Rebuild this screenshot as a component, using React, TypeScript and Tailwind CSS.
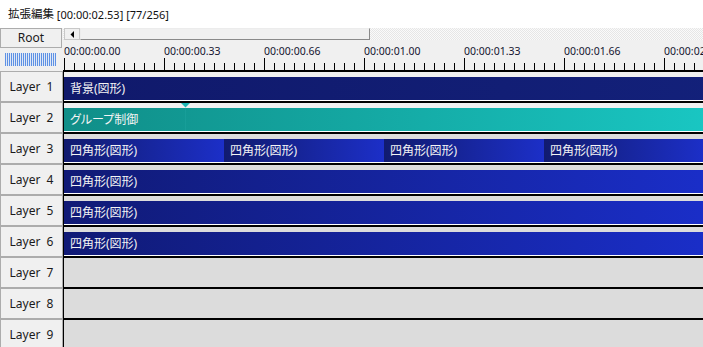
import React from "react";

const labels = [
  "00:00:00.00",
  "00:00:00.33",
  "00:00:00.66",
  "00:00:01.00",
  "00:00:01.33",
  "00:00:01.66",
  "00:00:02.00",
];

function LayerButton({ n }: { n: number }) {
  return (
    <div className="h-[31px] w-[63px] border border-[#acacac] bg-[#f0f0f0] flex items-center justify-center text-[12px] text-[#1a1a1a] whitespace-pre leading-none">
      {`Layer  ${n}`}
    </div>
  );
}

function Row({
  light,
  children,
}: {
  light?: boolean;
  children?: React.ReactNode;
}) {
  return (
    <div
      className={`relative h-[31px] flex flex-col border-l border-black ${
        light ? "bg-[#f0f0f0]" : "bg-[#dcdcdc]"
      }`}
    >
      <div className="h-[5px] shrink-0" />
      <div className="h-[24px] shrink-0 flex overflow-hidden">{children}</div>
      <div className="h-[2px] shrink-0 bg-black" />
    </div>
  );
}

function Obj({
  label,
  className,
}: {
  label: string;
  className: string;
}) {
  return (
    <div
      className={`h-[24px] shrink-0 border-b border-white flex items-center pl-[6px] text-[12px] leading-none text-[#f4f4f4] whitespace-nowrap font-['Noto_Sans','Noto_Sans_CJK_JP',sans-serif] [font-feature-settings:'palt'] ${className}`}
    >
      {label}
    </div>
  );
}

export default function App() {
  return (
    <div className="w-[703px] h-[347px] overflow-hidden bg-[#f0f0f0] font-['Noto_Sans','Noto_Sans_CJK_JP',sans-serif] text-black">
      <div className="h-[28px] bg-white flex items-center pl-[8px] leading-none text-[#111] whitespace-pre">
        <span className="text-[11.5px]">拡張編集</span>
        <span className="text-[11px]"> [00:00:02.53] [77/256]</span>
      </div>
      <div className="flex">
        {/* left column */}
        <div className="w-[63px] shrink-0 flex flex-col">
          <div className="h-[20px] w-[62px] border border-[#acacac] bg-[#f0f0f0] flex items-center justify-center text-[12px] leading-none text-[#1a1a1a]">
            Root
          </div>
          <div className="mt-[5px] ml-[5px] h-[13px] w-[51px] bg-[repeating-linear-gradient(90deg,#5e91e4_0px,#5e91e4_1px,#dfe8f6_1px,#dfe8f6_2px)]" />
          <div className="mt-[5px] flex flex-col">
            {[1, 2, 3, 4, 5, 6, 7, 8, 9].map((n) => (
              <LayerButton key={n} n={n} />
            ))}
          </div>
        </div>

        {/* right column */}
        <div className="flex-1 flex flex-col overflow-hidden">
          {/* scrollbar */}
          <div className="h-[12px] flex pl-[1px] bg-[repeating-conic-gradient(#e6e6e6_0%_25%,#fafafa_0%_50%)] bg-[length:2px_2px]">
            <div className="w-[16px] h-[12px] bg-[#f0f0f0] border border-[#c8c8c8] flex items-center justify-center">
              <svg width="5" height="7" viewBox="0 0 5 7">
                <polygon points="4,0 4,7 0.5,3.5" fill="#000" />
              </svg>
            </div>
            <div className="w-[290px] h-[12px] bg-[#f0f0f0] border border-[#ececec] border-b-[#8a8a8a] border-r-[#8a8a8a]" />
          </div>
          {/* ruler */}
          <div className="h-[32px] bg-[#f0f0f0] flex flex-col">
            <div className="h-[18px] flex pl-[1px] pt-[4px] items-center text-[10.5px] leading-none text-[#141430]">
              {labels.map((l) => (
                <div key={l} className="w-[100px] shrink-0 whitespace-nowrap">
                  {l}
                </div>
              ))}
            </div>
            <svg width="640" height="14" viewBox="0 0 640 14" className="block">
              {Array.from({ length: 65 }).map((_, i) => {
                const x = 1.5 + i * 10;
                const major = i % 10 === 0;
                return (
                  <line
                    key={i}
                    x1={x}
                    x2={x}
                    y1={major ? 0 : 5}
                    y2={12}
                    stroke="#000"
                    strokeWidth="1"
                  />
                );
              })}
              <rect x="0" y="12" width="640" height="2" fill="#000" />
            </svg>
          </div>
          {/* rows */}
          <div className="flex flex-col">
            <Row light>
              <Obj
                label="背景(図形)"
                className="w-[700px] bg-linear-to-r from-[#10196b] to-[#13217b]"
              />
            </Row>
            <Row light>
              <Obj
                label="グループ制御"
                className="w-[640px] bg-linear-to-r from-[#108e88] to-[#19c6c2]"
              />
              <div className="absolute left-[117px] top-0 w-[9px] h-[5px] flex justify-center">
                <svg width="9" height="5" viewBox="0 0 9 5">
                  <polygon points="0,0 9,0 4.5,4.5" fill="#1fb8b6" />
                </svg>
              </div>
              <div className="absolute left-[121px] top-[5px] w-[1px] h-[23px] bg-[#2bb0aa]/25" />
            </Row>
            <Row>
              {[0, 1, 2, 3].map((i) => (
                <Obj
                  key={i}
                  label="四角形(図形)"
                  className="w-[160px] bg-linear-to-r from-[#111b6f] to-[#1c2fc8]"
                />
              ))}
            </Row>
            {[4, 5, 6].map((n) => (
              <Row key={n}>
                <Obj
                  label="四角形(図形)"
                  className="w-[640px] bg-linear-to-r from-[#101a76] to-[#1a2ec8]"
                />
              </Row>
            ))}
            <Row />
            <Row />
            <Row />
          </div>
        </div>
      </div>
    </div>
  );
}
